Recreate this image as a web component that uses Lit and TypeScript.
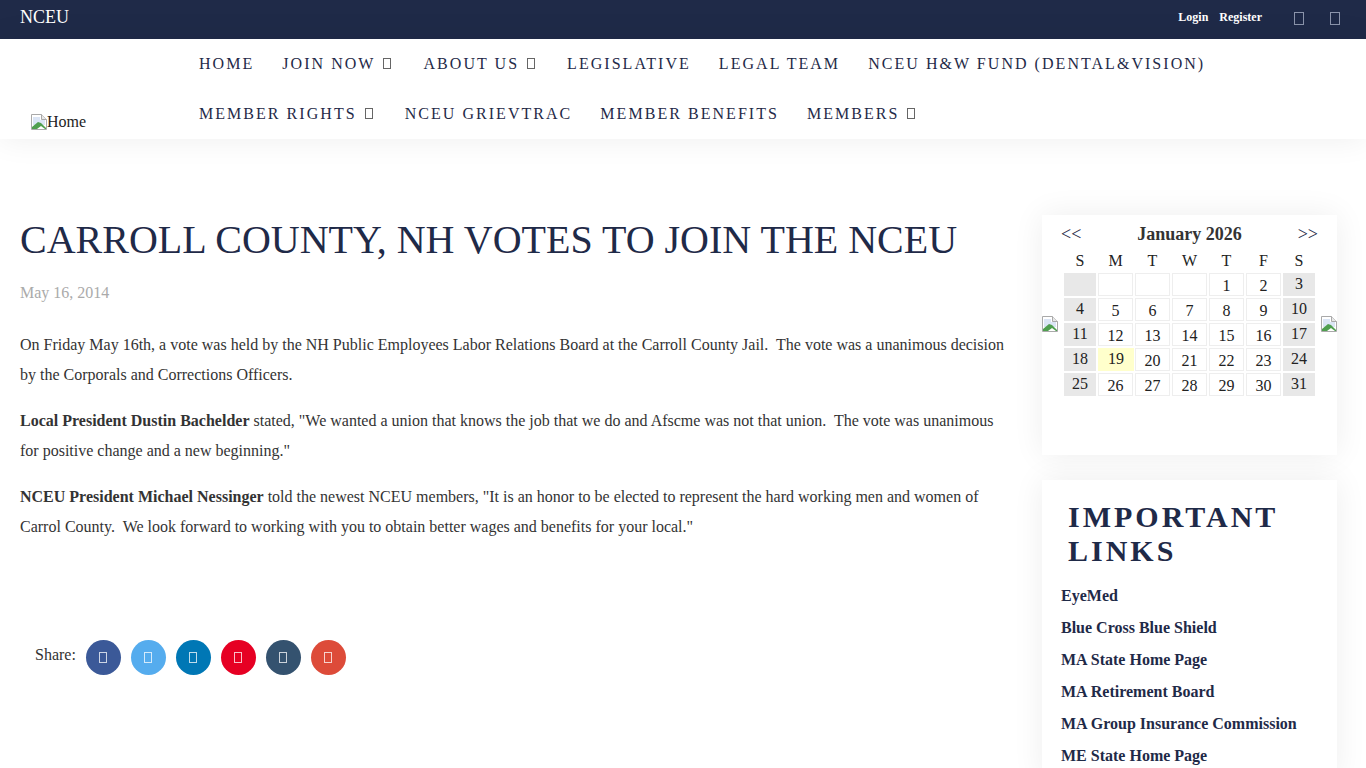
import { LitElement, html, css } from "lit";
import { customElement } from "lit/decorators.js";

const weeks: (string | number)[][] = [
  ["", "", "", "", 1, 2, 3],
  [4, 5, 6, 7, 8, 9, 10],
  [11, 12, 13, 14, 15, 16, 17],
  [18, 19, 20, 21, 22, 23, 24],
  [25, 26, 27, 28, 29, 30, 31],
];
const links = ["EyeMed", "Blue Cross Blue Shield", "MA State Home Page", "MA Retirement Board", "MA Group Insurance Commission", "ME State Home Page"];
const shares = ["#3b5998", "#55acee", "#0077b5", "#e60023", "#34526f", "#dd4b39"];

const broken = html`<svg class="broken" viewBox="0 0 16 16" width="16" height="16"><path d="M.5.5h10l5 5v10H.5z" fill="#fff" stroke="#a9a9a9"/><path d="M10.5.5v5h5" fill="#e8e8e8" stroke="#a9a9a9"/><path d="M2 3h7v3h5v5H2z" fill="#dbe5f5"/><path d="M1 15v-2l6-5 3 1 5 5v1z" fill="#4f9f4f"/><path d="M6 15l4-3 4 3z" fill="#fff"/></svg>`;

@customElement("app-root")
export class AppRoot extends LitElement {
  static styles = css`
    :host { display: block; height: 768px; overflow: hidden; background: #fff; font-family: "Liberation Serif", "Times New Roman", serif; color: #333; }
    .top { height: 39px; background: #1f2a48; display: flex; align-items: center; padding: 0 20px; box-sizing: border-box; color: #fff; }
    .brand { font-size: 18px; line-height: 34px; margin-top: -5px; flex: 1; }
    .auth { display: flex; gap: 11px; font-size: 12px; font-weight: bold; margin-top: -5px; }
    .icons { display: flex; gap: 26px; margin-left: 32px; margin-right: 6px; margin-top: -2px; }
    .tofu { display: inline-block; box-sizing: border-box; width: 8px; height: 11px; border: 1px solid currentColor; }
    .icons .tofu { color: #8b94ab; width: 10px; height: 13px; }
    .header { height: 100px; background: #fff; box-shadow: 0 0 30px rgba(0,0,0,.07); position: relative; display: flex; }
    .logo { width: 199px; box-sizing: border-box; padding: 75px 0 0 31px; font-size: 16px; line-height: 16px; display: flex; color: #222; }
    .nav { flex: 1; display: flex; flex-direction: column; color: #1f2a48; font-size: 16px; letter-spacing: 2.04px; }
    .row { height: 50px; display: flex; align-items: center; gap: 28px; white-space: nowrap; }
    .row .tofu { margin-left: 8px; margin-right: 4px; color: #666; }
    .main { display: flex; align-items: flex-start; padding: 77px 29px 0 20px; }
    .article { width: 990px; }
    h1 { margin: 0; font-size: 40px; font-weight: normal; line-height: 48px; color: #1f2a48; }
    .date { color: #aaa; font-size: 16px; line-height: 20px; margin-top: 19px; }
    p { margin: 0 0 16px; font-size: 16px; line-height: 30px; color: #333; }
    .date + p { margin-top: 27px; }
    .share { display: flex; align-items: center; margin-top: 98px; padding-left: 15px; font-size: 16px; }
    .share span.l { margin-right: 10px; margin-top: -6px; }
    .dots { display: flex; gap: 10px; }
    .dot { width: 35px; height: 35px; border-radius: 50%; display: flex; align-items: center; justify-content: center; color: rgba(255,255,255,.75); }
    .aside { margin-left: 32px; margin-top: -1px; width: 295px; }
    .card { background: #fff; box-shadow: 0 0 30px rgba(0,0,0,.07); }
    .cal { height: 240px; position: relative; box-sizing: border-box; padding: 9px 22px 0; }
    .cal .side { position: absolute; top: 101px; line-height: 0; }
    .cal .prev { left: 0; }
    .cal .next { right: 0; }
    .calhead { display: flex; justify-content: space-between; align-items: center; height: 20px; font-size: 18px; color: #1f2a48; margin: 0 -3px; }
    .month { font-weight: bold; color: #333; }
    .grid { display: grid; grid-template-columns: 32px 35px 35px 35px 35px 35px 32px; gap: 2px; margin-top: 5px; font-size: 16px; color: #222; text-align: center; }
    .dow { height: 22px; line-height: 24px; }
    .d { height: 23px; line-height: 23px; box-sizing: border-box; border: 1px solid #eee; }
    .we { background: #e8e8e8; border-color: #e8e8e8; line-height: 20px; }
    .today { background: #ffffcc; border-color: #ffffcc; line-height: 20px; margin-right: -1px; }
    .links { margin-top: 25px; padding: 20px 20px 0 19px; height: 300px; box-sizing: border-box; }
    h2 { margin: 0 0 12px 7px; font-size: 30px; line-height: 34px; letter-spacing: 3px; font-weight: bold; color: #1f2a48; }
    .link { font-size: 16px; font-weight: bold; line-height: 32px; color: #1f2a48; }
  `;
  render() {
    return html`
      <div class="top">
        <div class="brand">NCEU</div>
        <div class="auth"><span>Login</span><span>Register</span></div>
        <div class="icons"><span class="tofu"></span><span class="tofu"></span></div>
      </div>
      <div class="header">
        <div class="logo">${broken}<span>Home</span></div>
        <div class="nav">
          <div class="row"><span>HOME</span><span>JOIN NOW<span class="tofu"></span></span><span>ABOUT US<span class="tofu"></span></span><span>LEGISLATIVE</span><span>LEGAL TEAM</span><span>NCEU H&amp;W FUND (DENTAL&amp;VISION)</span></div>
          <div class="row"><span>MEMBER RIGHTS<span class="tofu"></span></span><span>NCEU GRIEVTRAC</span><span>MEMBER BENEFITS</span><span>MEMBERS<span class="tofu"></span></span></div>
        </div>
      </div>
      <div class="main">
        <div class="article">
          <h1>CARROLL COUNTY, NH VOTES TO JOIN THE NCEU</h1>
          <div class="date">May 16, 2014</div>
          <p>On Friday May 16th, a vote was held by the NH Public Employees Labor Relations Board at the Carroll County Jail.&nbsp; The vote was a unanimous decision by the Corporals and Corrections Officers.</p>
          <p><b>Local President Dustin Bachelder</b> stated, "We wanted a union that knows the job that we do and Afscme was not that union.&nbsp; The vote was unanimous for positive change and a new beginning."</p>
          <p><b>NCEU President Michael Nessinger</b> told the newest NCEU members, "It is an honor to be elected to represent the hard working men and women of Carrol County.&nbsp; We look forward to working with you to obtain better wages and benefits for your local."</p>
          <div class="share"><span class="l">Share:</span><div class="dots">${shares.map((c) => html`<div class="dot" style="background:${c}"><span class="tofu"></span></div>`)}</div></div>
        </div>
        <div class="aside">
          <div class="card cal">
            <span class="side prev">${broken}</span><span class="side next">${broken}</span>
            <div class="calhead"><span>&lt;&lt;</span><span class="month">January 2026</span><span>&gt;&gt;</span></div>
            <div class="grid">
              ${["S", "M", "T", "W", "T", "F", "S"].map((x) => html`<div class="dow">${x}</div>`)}
              ${weeks.map((w) => w.map((n, i) => html`<div class="d ${i === 0 || i === 6 ? "we" : ""} ${n === 19 ? "today" : ""}">${n}</div>`))}
            </div>
          </div>
          <div class="card links">
            <h2>IMPORTANT LINKS</h2>
            ${links.map((l) => html`<div class="link">${l}</div>`)}
          </div>
        </div>
      </div>
    `;
  }
}
